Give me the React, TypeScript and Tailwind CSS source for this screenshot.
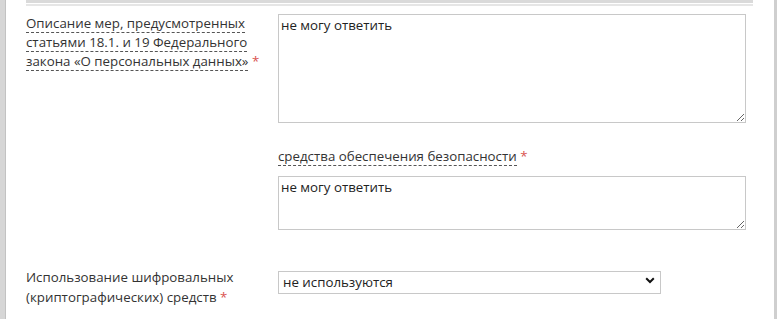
import React from "react";

export default function App() {
  return (
    <div
      className="flex h-[319px] w-[777px] overflow-hidden bg-white text-[#333]"
      style={{ fontFamily: '"Open Sans", "Noto Sans", sans-serif' }}
    >
      <div className="h-full w-[6px] shrink-0 border-r border-[#c2c2c2] bg-[#d6d6d6]" />
      <div className="h-full flex-1 pl-[20px] pr-[21px]">
        <div className="h-[3px] bg-[#dadada]" />
        <div className="h-[1px]" />
        <div className="h-[2px] bg-[#e6e6e6]" />

        <div className="mt-[8px] grid grid-cols-[252px_468px]">
          <div className="pr-[2px] text-[13.3px] leading-[19px]">
            <span className="border-b border-dashed border-[#555]">
              Описание мер, предусмотренных статьями 18.1. и 19 Федерального закона «О персональных данных»
            </span>{" "}
            <span className="text-[#d9534f]">*</span>
          </div>
          <div className="flex flex-col">
            <textarea
              className="h-[109px] w-[468px] resize-y border border-[#c8c8c8] bg-white px-[2px] py-[1px] text-[13.3px] leading-[19px] text-[#222] outline-none"
              defaultValue="не могу ответить"
            />
            <div className="mt-[24px] text-[13.3px] leading-[19px]">
              <span className="border-b border-dashed border-[#555]">средства обеспечения безопасности</span>{" "}
              <span className="text-[#d9534f]">*</span>
            </div>
            <textarea
              className="mt-[10px] h-[54px] w-[468px] resize-y border border-[#c8c8c8] bg-white px-[2px] py-[1px] text-[13.3px] leading-[19px] text-[#222] outline-none"
              defaultValue="не могу ответить"
            />
          </div>
        </div>

        <div className="mt-[37px] grid grid-cols-[252px_468px]">
          <div className="text-[13.3px] leading-[20px]">
            Использование шифровальных (криптографических) средств{" "}
            <span className="text-[#d9534f]">*</span>
          </div>
          <div>
            <div className="relative mt-[2px] h-[23px] w-[383px]">
              <select
                className="h-full w-full appearance-none border border-[#c8c8c8] bg-white pl-[4px] text-[13.3px] text-[#222] outline-none"
                defaultValue="no"
              >
                <option value="no">не используются</option>
                <option value="yes">используются</option>
              </select>
              <svg
                className="pointer-events-none absolute right-[6px] top-[8px]"
                width="10"
                height="7"
                viewBox="0 0 10 7"
              >
                <path d="M1.2 1.3 L5 5 L8.8 1.3" fill="none" stroke="#111" strokeWidth="2" />
              </svg>
            </div>
          </div>
        </div>
      </div>
      <div className="h-full w-[3px] shrink-0 bg-[#cfcfcf]" />
    </div>
  );
}
